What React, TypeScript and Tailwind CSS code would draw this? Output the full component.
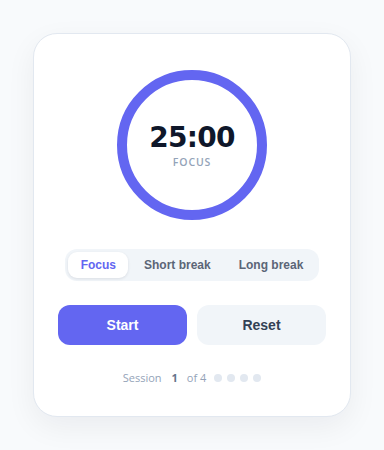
import React, { useState } from 'react';

type Mode = 'focus' | 'short' | 'long';

const MODES: { id: Mode; label: string }[] = [
  { id: 'focus', label: 'Focus' },
  { id: 'short', label: 'Short break' },
  { id: 'long', label: 'Long break' },
];

export default function App() {
  const [mode, setMode] = useState<Mode>('focus');

  return (
    <div className="min-h-screen w-full bg-[#f8fafc] flex items-center justify-center">
      <div className="w-[318px] h-[384px] bg-white rounded-[24px] border border-[#e2e8f0] shadow-[0_10px_30px_rgba(15,23,42,0.06)] flex flex-col items-center pt-9 px-6">
        <div className="relative w-[150px] h-[150px]">
          <svg width="150" height="150" viewBox="0 0 150 150" className="absolute inset-0">
            <circle cx="75" cy="75" r="70" fill="none" stroke="#6366f1" strokeWidth="10" />
          </svg>
          <div className="absolute inset-0 flex flex-col items-center justify-center pt-[2px]">
            <div className="text-[28px] leading-8 font-bold tracking-tight text-[#0f172a] font-['DejaVu_Sans',sans-serif]">
              25:00
            </div>
            <div className="text-[10.5px] leading-4 font-semibold tracking-[0.08em] text-[#94a3b8] font-['Open_Sans',sans-serif]">
              FOCUS
            </div>
          </div>
        </div>

        <div className="mt-[29px] flex items-center gap-[3px] bg-[#f1f5f9] rounded-xl p-[3px] font-['Liberation_Sans',Arial,sans-serif]">
          {MODES.map((m) => (
            <button
              key={m.id}
              onClick={() => setMode(m.id)}
              className={
                mode === m.id
                  ? 'h-[26px] px-[12.5px] rounded-[9px] bg-white shadow-[0_1px_3px_rgba(15,23,42,0.1)] text-[12px] font-bold text-[#6366f1]'
                  : 'h-[26px] px-[12.5px] rounded-[9px] text-[12px] font-bold text-[#5b6577]'
              }
            >
              {m.label}
            </button>
          ))}
        </div>

        <div className="mt-6 w-full flex gap-[10px] font-['Liberation_Sans',Arial,sans-serif]">
          <button className="flex-1 h-10 rounded-xl bg-[#6366f1] text-white text-[14px] font-bold">Start</button>
          <button className="flex-1 h-10 rounded-xl bg-[#f1f5f9] text-[#334155] text-[14px] font-bold">Reset</button>
        </div>

        <div className="mt-[25px] flex items-center text-[11px] text-[#94a3b8] font-['Open_Sans',sans-serif]">
          <span>Session</span>
          <span className="ml-[10px] font-bold text-[#64748b]">1</span>
          <span className="ml-[9px]">of 4</span>
          <div className="ml-[8px] flex gap-[5px]">
            {[0, 1, 2, 3].map((i) => (
              <span key={i} className="w-2 h-2 rounded-full bg-[#e2e8f0]" />
            ))}
          </div>
        </div>
      </div>
    </div>
  );
}
